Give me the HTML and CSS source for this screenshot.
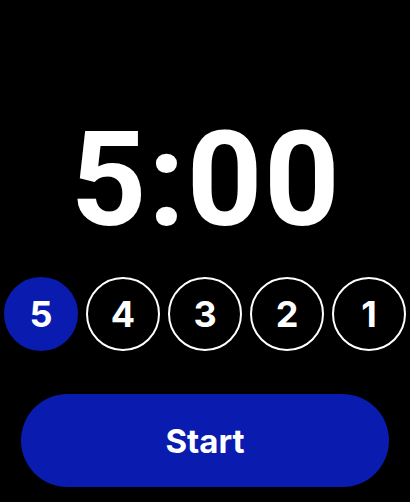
FILE: index.html
```html
<!DOCTYPE html>
<html lang="en">
<head>
  <meta charset="UTF-8" />
  <meta name="viewport" content="width=device-width, initial-scale=1.0"/>
  <title>Timer</title>
  <link rel="stylesheet" href="styles.css">
</head>
<body>
  <div class="screen">
    <div class="time">5:00</div>

    <div class="presets">
      <div class="preset active">5</div>
      <div class="preset">4</div>
      <div class="preset">3</div>
      <div class="preset">2</div>
      <div class="preset">1</div>
    </div>

    <button class="start">Start</button>
  </div>
</body>
</html>
```

FILE: styles.css
```css
body {
  margin: 0;
  background: #000;
  font-family: Inter, "Noto Sans", sans-serif;
  color: #fff;
}

.screen {
  width: 410px;
  height: 502px;
  display: flex;
  flex-direction: column;
  align-items: center;
  box-sizing: border-box;
  padding-top: 118px;
}

.time {
  font-family: Roboto, Inter, sans-serif;
  font-size: 132px;
  font-weight: 700;
  line-height: 124px;
  letter-spacing: 1.5px;
  padding-left: 2px;
}

.presets {
  display: flex;
  gap: 8px;
  margin-top: 35px;
}

.preset {
  width: 74px;
  height: 74px;
  box-sizing: border-box;
  border: 2.5px solid #fff;
  border-radius: 50%;
  display: flex;
  align-items: center;
  justify-content: center;
  font-size: 36px;
  font-weight: 700;
}

.preset.active {
  background: #0a1bb0;
  border-color: #0a1bb0;
}

.start {
  margin-top: 43px;
  width: 368px;
  height: 93px;
  border: none;
  border-radius: 47px;
  background: #0a1bb0;
  color: #fff;
  font-family: Inter, "Noto Sans", sans-serif;
  font-size: 33px;
  font-weight: 700;
}
```
